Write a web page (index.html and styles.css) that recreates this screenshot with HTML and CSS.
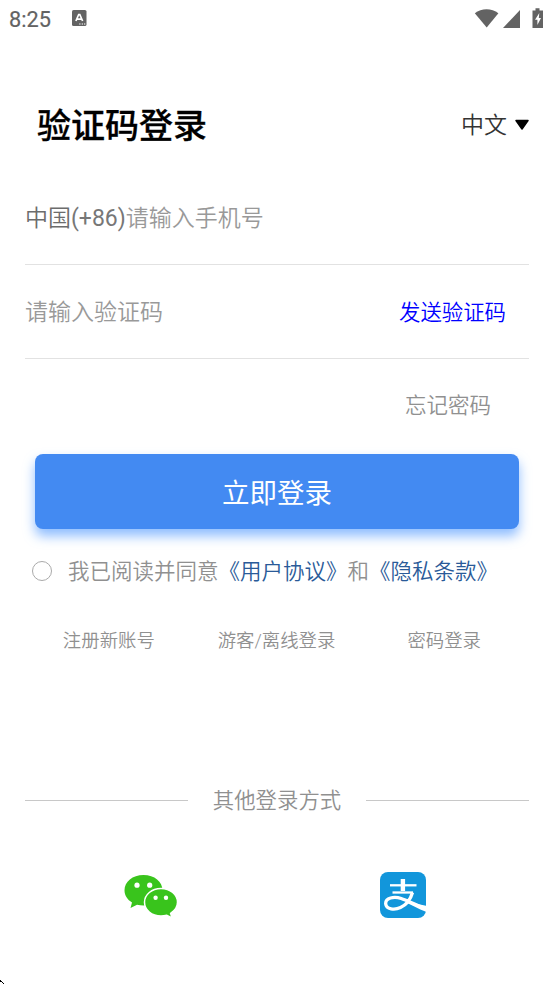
FILE: index.html
```html
<!DOCTYPE html>
<html lang="zh-CN">
<head>
<meta charset="utf-8">
<title>验证码登录</title>
<link rel="stylesheet" href="styles.css">
</head>
<body>
<div class="screen">
  <header class="status">
    <span class="clock">8:25</span>
    <svg class="input-icon" width="15" height="17" viewBox="0 0 15 17"><rect width="14.5" height="16" rx="1.6" fill="#636363"/><path d="M3.9 11 6.700 4.500h1.100l2.800 6.500M5 9.200h4.500" fill="none" stroke="#fff" stroke-width="1.7"/><path d="M7.2 14h1.3M9.7 14H11M12 14h1.3" stroke="#fff" stroke-width="1.2"/></svg>
    <svg class="signals" width="70" height="21" viewBox="0 0 70 21"><path d="M.8 5.2C7.5-.2 17.600-.2 24.400 5.200L12.700 19.500z" fill="#636363"/><path d="M46 2v18H29z" fill="#636363"/><path d="M58.500 2.500h3V.3h4v2.200H69V20H58.500z" fill="#636363"/><path d="M65.300 5 61 11.800h2.400V17l3.600-7h-2.200z" fill="#fff"/></svg>
  </header>

  <div class="heading">
    <h1>验证码登录</h1>
    <div class="language">中文<svg width="16" height="12" viewBox="0 0 16 12"><path d="M2 1.500h12L8 10z" stroke="#000" stroke-width="1.500" stroke-linejoin="round"/></svg></div>
  </div>

  <main>
    <div class="field"><span class="country">中国<span class="code">(+86)</span></span><span class="hint">请输入手机号</span></div>
    <div class="field"><span class="hint">请输入验证码</span><a class="send">发送验证码</a></div>
    <div class="forgot">忘记密码</div>
    <button class="login">立即登录</button>
    <div class="agreement"><i class="radio"></i><span>我已阅读并同意<a>《用户协议》</a>和<a>《隐私条款》</a></span></div>
    <nav class="links"><span>注册新账号</span><span>游客/离线登录</span><span>密码登录</span></nav>
    <div class="divider"><span>其他登录方式</span></div>
    <div class="providers">
      <svg class="wechat" width="54" height="44" viewBox="0 0 54 44"><path d="M19.500 1C8.500 1 .5 7.700.500 16.300c0 5.400 3 9.500 7.500 12.200L6.500 34l6.500-3.300c2.200.6 4.400.8 6.500.8 11 0 19-6.700 19-15.200S30.500 1 19.500 1z" fill="#39c41c"/><path d="M37 14.500c-9.200 0-16.500 6-16.500 13.800S27.800 42 37 42c2 0 4-.3 5.800-.8L48 43.800l-1.400-4.500c4.200-2.600 6.900-6.400 6.900-11 0-7.800-7.300-13.800-16.500-13.800z" fill="#39c41c" stroke="#fff" stroke-width="1.500"/><g fill="#fff"><circle cx="13" cy="11.200" r="2.600"/><circle cx="25.700" cy="11.200" r="2.600"/><circle cx="31.600" cy="23.700" r="2.200"/><circle cx="42" cy="23.700" r="2.200"/></g></svg>
      <svg width="46" height="46" viewBox="0 0 46 46"><rect width="46" height="46" rx="8" fill="#1296db"/><g fill="none" stroke="#fff"><path d="M22.900 7v12" stroke-width="4.400"/><path d="M10 13.300h26.500" stroke-width="2.300"/><path d="M12.500 20.500H33" stroke-width="2.300"/><path d="M32.500 20.500c-2 7-6.500 12.500-12 15-6 2.800-14.300 1.800-14.800-3.700-.5-6 8.300-7.800 15.500-5.300C29 29.200 36 33.500 46 36.500" stroke-width="3.300"/></g><path d="M28 28.500c6 2.600 11 4 18 5.300v6c-8-3-14-6.500-19.500-9z" fill="#fff"/></svg>
    </div>
  </main>
  <svg class="corner" width="4" height="4" viewBox="0 0 4 4"><path d="M0 0h1v1h1v1H0zM2 2h1v1H2zM3 3h1v1H3z"/></svg>
</div>
</body>
</html>
```
FILE: styles.css
```css
* { box-sizing: border-box; }
body { margin: 0; background: #fff; font-family: Roboto, "Noto Sans CJK SC", sans-serif; font-weight: 350; }
svg { display: block; flex: none; }
.screen { position: relative; width: 554px; height: 984px; overflow: hidden; }
.status { height: 40px; display: flex; align-items: flex-start; padding: 8px 10px 0 9px; color: #636363; }
.clock { font-size: 21.7px; line-height: 24px; width: 63px; font-weight: 400; -webkit-text-stroke: .2px #636363; }
.input-icon { margin-top: 2px; }
.signals { margin-left: auto; }
.heading { height: 131px; display: flex; justify-content: space-between; align-items: center; padding: 40px 25px 0 37px; }
h1 { margin: 0; font-size: 34px; line-height: 48px; font-weight: 500; -webkit-text-stroke: .3px #000; color: #000; }
.language { display: flex; align-items: center; gap: 7px; font-size: 23px; line-height: 34px; color: #333; }
.language svg { margin-top: -2px; margin-right: -1px; }
main { padding: 0 25px; }
.field { height: 94px; display: flex; align-items: center; padding-top: 2px; border-bottom: 1px solid #e2e2e2; font-size: 23px; line-height: 34px; }
.country { color: #6c6c6c; }
.code { font-weight: 400; color: #777; }
.hint { color: #999; }
.send { margin-left: auto; margin-right: 23px; font-size: 21.4px; color: #0000ff; }
.forgot { height: 95px; padding-right: 38px; text-align: right; font-size: 21.5px; line-height: 94px; color: #909090; }
.login { display: block; width: 484px; height: 75px; margin: 0 auto; padding: 5px 0 0; border: 0; border-radius: 8px; background: #438af2; box-shadow: 0 7px 12px rgba(67, 145, 255, .6); color: #fff; font-family: inherit; font-size: 27.5px; line-height: 40px; }
.agreement { height: 84px; display: flex; align-items: center; padding-left: 7px; font-size: 21.5px; line-height: 32px; color: #909090; white-space: nowrap; }
.agreement span { padding-top: 2px; }
.agreement a { color: #2a5a98; }
.radio { width: 20px; height: 20px; margin-right: 16px; border: 1px solid #aaa; border-radius: 50%; }
.links { height: 54px; display: grid; grid-template-columns: repeat(3, 1fr); align-items: center; padding: 2px 1px 0 0; text-align: center; font-size: 18.4px; line-height: 28px; color: #909090; }
.divider { height: 54px; margin-top: 106px; display: flex; align-items: center; gap: 25px; font-size: 21.4px; line-height: 32px; color: #909090; }
.divider span { padding-top: 2px; }
.divider::before, .divider::after { content: ""; flex: 1; height: 1px; background: #c8c8c8; }
.providers { height: 136px; display: grid; grid-template-columns: 1fr 1fr; align-items: center; justify-items: center; }
.wechat { margin-top: 2px; }
.corner { position: absolute; left: 0; bottom: 0; }
```
